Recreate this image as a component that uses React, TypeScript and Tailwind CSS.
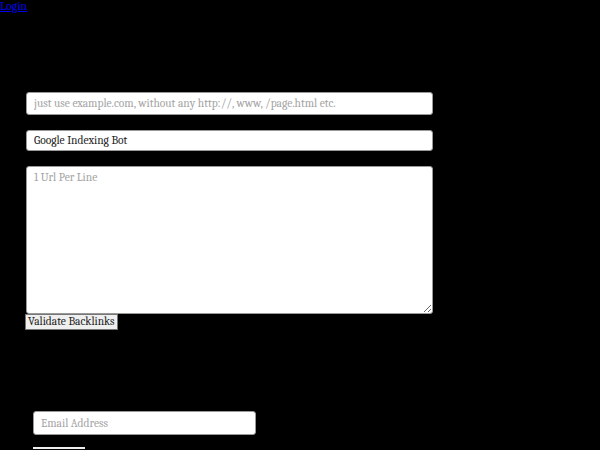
export default function App() {
  return (
    <div className="min-h-screen bg-black font-serif overflow-hidden">
      <a href="#" className="block text-[12px] leading-[12px] text-[#0000ee] underline w-fit">
        Login
      </a>

      <form className="pl-[26px] pt-[80px] w-[433px]">
        <input
          type="text"
          placeholder="just use example.com, without any http://, www, /page.html etc."
          className="block w-full h-[23px] rounded-[3px] border border-[#999] bg-white px-[7px] text-[11.5px] text-[#222] placeholder:text-[#a3a3a3] outline-none"
        />
        <input
          type="text"
          defaultValue="Google Indexing Bot"
          className="mt-[15px] block w-full h-[21px] rounded-[3px] border border-[#999] bg-white px-[7px] text-[11.5px] text-[#222] outline-none"
        />
        <textarea
          placeholder="1 Url Per Line"
          className="mt-[15px] block w-full h-[148px] rounded-[3px] border border-[#999] bg-white px-[7px] py-[2px] text-[11.5px] text-[#222] placeholder:text-[#a3a3a3] outline-none"
        />
        <button
          type="button"
          className="-ml-px block h-[16px] whitespace-nowrap border border-[#767676] bg-[#efefef] px-[2px] text-[11.5px] leading-[14px] text-[#222]"
        >
          Validate Backlinks
        </button>
      </form>

      <div className="pl-[33px] pt-[81px]">
        <input
          type="email"
          placeholder="Email Address"
          className="block w-[223px] h-[24px] rounded-[3px] border border-[#999] bg-white px-[7px] text-[11.5px] placeholder:text-[#a3a3a3] outline-none"
        />
        <button
          type="button"
          className="mt-[12px] block h-[20px] w-[52px] border-t-2 border-[#eee] bg-black"
        />
      </div>
    </div>
  );
}
